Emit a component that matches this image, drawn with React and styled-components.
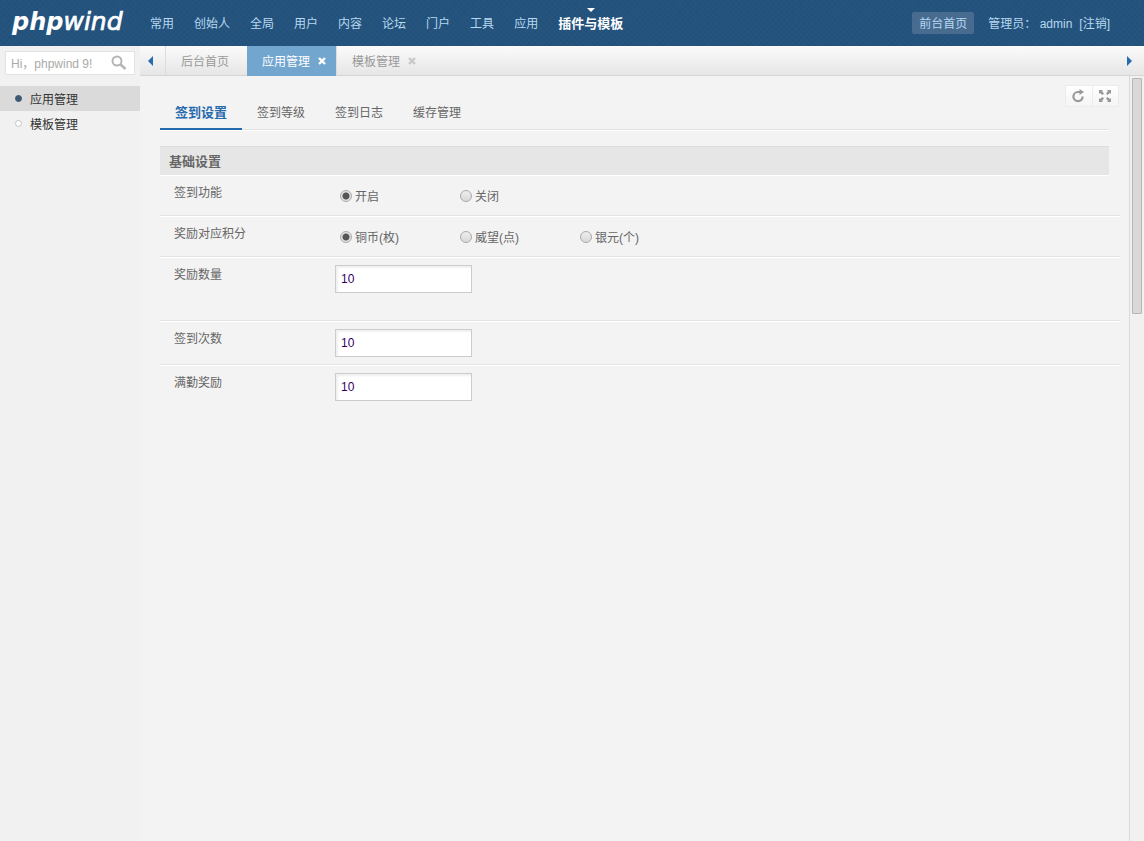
import React, { useState } from 'react'
import styled, { createGlobalStyle } from 'styled-components'

const navItems = ['常用', '创始人', '全局', '用户', '内容', '论坛', '门户', '工具', '应用', '插件与模板']
const menuItems = ['应用管理', '模板管理']
const subTabs = ['签到设置', '签到等级', '签到日志', '缓存管理']

const CloseIcon = () => (
    <svg width="8" height="8" viewBox="0 0 8 8" aria-hidden="true">
        <path d="M1 1L7 7M7 1L1 7" stroke="currentColor" strokeWidth="2.4" />
    </svg>
)

const RadioRow = ({ name, options, value, onChange }) => (
    <RadioList>
        {options.map(option => (
            <RadioLabel key={option}>
                <Radio
                    type="radio"
                    name={name}
                    checked={value === option}
                    onChange={() => onChange(option)} />
                <Caption>{option}</Caption>
            </RadioLabel>
        ))}
    </RadioList>
)

const App = () => {
    const [menu, setMenu] = useState('应用管理')
    const [subTab, setSubTab] = useState('签到设置')
    const [enabled, setEnabled] = useState('开启')
    const [credit, setCredit] = useState('铜币(枚)')

    return (
        <Page>
            <GlobalStyle />
            <Header>
                <Logo href="#" aria-label="phpwind">
                    <svg width="130" height="44" viewBox="0 0 130 44">
                        <text x="12" y="29" fontFamily="'DejaVu Sans', sans-serif" fontStyle="italic" fill="#fff">
                            <tspan fontWeight="bold" fontSize="24">php</tspan>
                            <tspan fontSize="25" stroke="#fff" strokeWidth="0.7">wind</tspan>
                        </text>
                    </svg>
                </Logo>
                <Nav>
                    {navItems.map(item => (
                        <NavLink key={item} href="#" $active={item === '插件与模板'}>{item}</NavLink>
                    ))}
                </Nav>
                <Account>
                    <HomeLink href="#">前台首页</HomeLink>
                    <Caption>管理员： admin</Caption>
                    <LogoutLink href="#">[注销]</LogoutLink>
                </Account>
            </Header>
            <Body>
                <Sidebar>
                    <Search>
                        <SearchInput type="text" aria-label="搜索" placeholder="Hi，phpwind 9!" />
                        <SearchButton aria-label="搜索">
                            <svg width="16" height="16" viewBox="0 0 16 16" fill="none" stroke="#b5b5b5">
                                <circle cx="6" cy="6" r="4.5" strokeWidth="2" />
                                <path d="M9.5 9.5L14.5 14" strokeWidth="2.6" />
                            </svg>
                        </SearchButton>
                    </Search>
                    {menuItems.map(item => (
                        <MenuItem key={item} href="#" $active={item === menu} onClick={() => setMenu(item)}>
                            <Dot $active={item === menu} />
                            <Caption>{item}</Caption>
                        </MenuItem>
                    ))}
                </Sidebar>
                <Main>
                    <TabBar>
                        <ArrowButton aria-label="向左">
                            <svg width="5" height="10" viewBox="0 0 5 10"><path d="M5 0V10L0 5Z" fill="#266aae" /></svg>
                        </ArrowButton>
                        <Tabs>
                            <Tab><TabLink href="#">后台首页</TabLink></Tab>
                            <Tab $active>
                                <TabLink href="#">应用管理</TabLink>
                                <CloseButton $active aria-label="关闭"><CloseIcon /></CloseButton>
                            </Tab>
                            <Tab>
                                <TabLink href="#">模板管理</TabLink>
                                <CloseButton aria-label="关闭"><CloseIcon /></CloseButton>
                            </Tab>
                        </Tabs>
                        <ArrowButton aria-label="向右">
                            <svg width="5" height="10" viewBox="0 0 5 10"><path d="M0 0V10L5 5Z" fill="#266aae" /></svg>
                        </ArrowButton>
                    </TabBar>
                    <Frame>
                        <Content>
                            <Tools>
                                <ToolButton aria-label="刷新">
                                    <svg width="14" height="14" viewBox="0 0 14 14">
                                        <path d="M9 3H6.5A4.6 4.6 0 1 0 11.6 7.5" fill="none" stroke="#999" strokeWidth="2.2" />
                                        <path d="M8.5 0L13 3L8.5 6Z" fill="#999" />
                                    </svg>
                                </ToolButton>
                                <ToolButton aria-label="全屏">
                                    <svg width="12" height="12" viewBox="0 0 12 12" fill="#999">
                                        <path d="M0 0H4L3 1L5 3.5L3.5 5L1 3L0 4ZM12 0V4L11 3L8.5 5L7 3.5L9 1L8 0ZM0 12V8L1 9L3.5 7L5 8.5L3 11L4 12ZM12 12H8L9 11L7 8.5L8.5 7L11 9L12 8Z" />
                                    </svg>
                                </ToolButton>
                            </Tools>
                            <SubNav>
                                {subTabs.map(item => (
                                    <SubLink key={item} href="#" $active={item === subTab} onClick={() => setSubTab(item)}>
                                        {item}
                                    </SubLink>
                                ))}
                            </SubNav>
                            <SectionTitle>基础设置</SectionTitle>
                            <Row>
                                <Label as="span">签到功能</Label>
                                <RadioRow name="enabled" options={['开启', '关闭']} value={enabled} onChange={setEnabled} />
                            </Row>
                            <Row>
                                <Label as="span">奖励对应积分</Label>
                                <RadioRow
                                    name="credit"
                                    options={['铜币(枚)', '威望(点)', '银元(个)']}
                                    value={credit}
                                    onChange={setCredit} />
                            </Row>
                            <Row $tall>
                                <Label htmlFor="amount">奖励数量</Label>
                                <TextInput id="amount" type="text" defaultValue="10" />
                            </Row>
                            <Row>
                                <Label htmlFor="times">签到次数</Label>
                                <TextInput id="times" type="text" defaultValue="10" />
                            </Row>
                            <Row>
                                <Label htmlFor="bonus">满勤奖励</Label>
                                <TextInput id="bonus" type="text" defaultValue="10" />
                            </Row>
                        </Content>
                        <ScrollTrack>
                            <ScrollThumb />
                        </ScrollTrack>
                    </Frame>
                </Main>
            </Body>
        </Page>
    )
}

export default App

const GlobalStyle = createGlobalStyle`
    * {
        box-sizing: border-box;
    }

    body {
        margin: 0;
        background: #f3f3f3;
        color: #666;
        font-family: "Liberation Sans", "Noto Sans CJK SC", sans-serif;
        font-size: 12px;
        line-height: 18px;
    }

    a {
        color: inherit;
        text-decoration: none;
    }

    button, input {
        margin: 0;
        padding: 0;
        border: 0;
        background: none;
        font: inherit;
    }

    button {
        display: flex;
        align-items: center;
        justify-content: center;
        cursor: pointer;
    }

    svg {
        display: block;
    }
`

const Page = styled.div`
    display: flex;
    flex-direction: column;
    min-height: 100vh;
`

const Caption = styled.span`
    padding-top: 2px;
`

const Header = styled.header`
    display: flex;
    align-items: center;
    height: 46px;
    padding-right: 34px;
    background-color: #25557f;
    background-image:
        repeating-linear-gradient(45deg, rgba(0, 20, 50, 0.05) 0 1px, transparent 1px 4px),
        repeating-linear-gradient(-45deg, rgba(0, 20, 50, 0.05) 0 1px, transparent 1px 4px);
    color: #b8d8f0;
`

const Logo = styled.a`
    width: 140px;
`

const Nav = styled.nav`
    display: flex;
    flex: 1;
`

const NavLink = styled.a`
    position: relative;
    padding: 2px 10px 0;
    line-height: 44px;
    color: ${props => props.$active ? '#fff' : 'inherit'};
    font-size: ${props => props.$active ? '13px' : '12px'};
    font-weight: ${props => props.$active ? 'bold' : 'normal'};

    &:before {
        display: ${props => props.$active ? 'block' : 'none'};
        position: absolute;
        top: 8px;
        left: 50%;
        margin-left: -4px;
        border: 4px solid transparent;
        border-top-color: #fff;
        border-bottom: 0;
        content: "";
    }
`

const Account = styled.div`
    display: flex;
    align-items: center;
    white-space: pre;
`

const HomeLink = styled.a`
    margin-right: 14px;
    padding: 2px 7px 0;
    border-radius: 2px;
    background: #476c90;
    line-height: 20px;
`

const LogoutLink = styled.a`
    padding: 2px 0 0 7px;
`

const Body = styled.div`
    display: flex;
    flex: 1;
`

const Sidebar = styled.aside`
    width: 140px;
    padding-top: 5px;
    background: #f1f1f1;
`

const Search = styled.div`
    display: flex;
    align-items: center;
    height: 24px;
    margin: 0 5px 11px;
    border: 1px solid #e3e3e3;
    background: #fff;
`

const SearchInput = styled.input`
    flex: 1;
    min-width: 0;
    padding: 2px 0 0 5px;

    &::placeholder {
        color: #aaa;
        opacity: 1;
    }
`

const SearchButton = styled.button`
    width: 30px;
    height: 22px;
`

const MenuItem = styled.a`
    display: flex;
    align-items: center;
    gap: 8px;
    height: 25px;
    padding-left: 15px;
    background: ${props => props.$active ? '#dadada' : 'transparent'};
    color: #333;
`

const Dot = styled.span`
    width: 7px;
    height: 7px;
    border: 1px solid ${props => props.$active ? '#3d5871' : '#c4c4c4'};
    border-radius: 50%;
    background: ${props => props.$active ? '#3d5871' : '#fff'};
`

const Main = styled.main`
    display: flex;
    flex: 1;
    flex-direction: column;
    min-width: 0;
`

const TabBar = styled.div`
    display: flex;
    height: 30px;
    background: linear-gradient(#fbfbfb, #e5e5e5);
    box-shadow: inset 0 -1px #d5d5d5;
`

const ArrowButton = styled.button`
    width: 25px;
    padding-right: 4px;
`

const Tabs = styled.div`
    display: flex;
    flex: 1;
`

const Tab = styled.div`
    display: flex;
    align-items: center;
    padding: 0 ${props => props.$active ? '10px' : '18px'} 0 15px;
    border-left: ${props => props.$active ? '0' : '1px solid #dcdcdc'};
    background: ${props => props.$active ? '#73a6cf' : 'transparent'};
    color: ${props => props.$active ? '#fff' : '#999'};
`

const TabLink = styled.a`
    padding-top: 2px;
    line-height: 28px;
`

const CloseButton = styled.button`
    margin-left: 8px;
    color: ${props => props.$active ? '#fff' : '#c8c8c8'};
`

const Frame = styled.div`
    display: flex;
    flex: 1;
`

const Content = styled.div`
    position: relative;
    flex: 1;
    padding: 20px 9px 0 20px;
`

const Tools = styled.div`
    position: absolute;
    top: 9px;
    right: 10px;
    display: flex;
    border: 1px solid #ececec;
    background: linear-gradient(#fff, #f5f5f5);
`

const ToolButton = styled.button`
    width: 26px;
    height: 20px;
    padding-right: 2px;

    & + & {
        border-left: 1px solid #ececec;
    }
`

const SubNav = styled.nav`
    display: flex;
    height: 35px;
    margin: 0 11px 15px 0;
    border-bottom: 1px solid #fff;
    box-shadow: inset 0 -1px #e3e3e3;
`

const SubLink = styled.a`
    height: 34px;
    padding: 0 15px;
    border-bottom: 2px solid ${props => props.$active ? '#266aae' : 'transparent'};
    color: ${props => props.$active ? '#266aae' : 'inherit'};
    font-size: ${props => props.$active ? '13px' : '12px'};
    font-weight: ${props => props.$active ? 'bold' : 'normal'};
    line-height: 34px;
`

const SectionTitle = styled.h2`
    margin: 0 11px 0 0;
    padding: 6px 9px 4px;
    border-top: 1px solid #dcdcdc;
    border-bottom: 1px solid #fff;
    background: #e6e6e6;
    font-size: 13px;
    line-height: 18px;
`

const Row = styled.div`
    display: flex;
    align-items: flex-start;
    padding: 7px 0 ${props => props.$tall ? '27px' : '7px'} 14px;

    &:not(:last-child) {
        border-bottom: 1px solid #e3e3e3;
        box-shadow: 0 1px #fff;
        margin-bottom: 1px;
    }
`

const Label = styled.label`
    width: 161px;
    line-height: 20px;
`

const RadioList = styled.div`
    display: flex;
    flex-wrap: wrap;
`

const RadioLabel = styled.label`
    display: flex;
    align-items: center;
    gap: 3px;
    width: 120px;
    height: 25px;
    padding-left: 5px;
`

const Radio = styled.input`
    appearance: none;
    width: 12px;
    height: 12px;
    border: 1px solid #aaa;
    border-radius: 50%;
    background: linear-gradient(#eee, #d8d8d8);

    &:checked {
        background: radial-gradient(circle, #555 0 3px, #e3e3e3 4px);
    }
`

const TextInput = styled.input`
    width: 137px;
    height: 28px;
    padding: 0 5px;
    border: 1px solid #ccc;
    background: #fff;
    box-shadow: inset 2px 2px 2px #f0f0f0;
    color: #306;
`

const ScrollTrack = styled.div`
    width: 15px;
    padding: 2px 2px 0;
    border-left: 1px solid #d9d9d9;
    background: #f1f1f1;
`

const ScrollThumb = styled.div`
    height: 236px;
    border: 1px solid #b5b5b5;
    border-radius: 1px;
    background: #d9d9d9;
`
